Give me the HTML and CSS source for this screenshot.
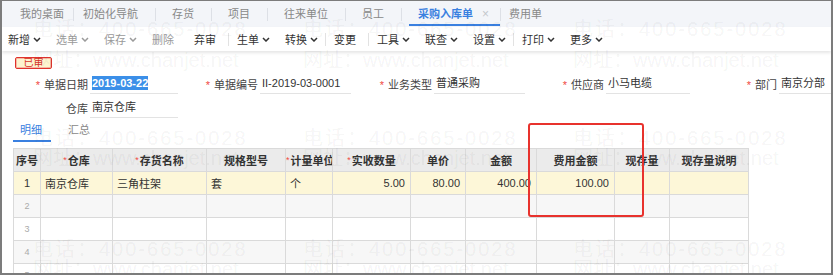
FILE: index.html
```html
<!DOCTYPE html>
<html lang="zh-CN">
<head>
<meta charset="UTF-8">
<title>采购入库单</title>
<link rel="stylesheet" href="styles.css">
</head>
<body>
<div class="window">
  <!-- top tabs -->
  <div class="tabs">
    <span class="tab home">我的桌面</span>
    <span class="tab nav">初始化导航</span>
    <span class="tab">存货</span>
    <span class="tab">项目</span>
    <span class="tab">往来单位</span>
    <span class="tab">员工</span>
    <span class="tab active">采购入库单<span class="close">×</span></span>
    <span class="tab last">费用单</span>
  </div>

  <!-- toolbar -->
  <div class="toolbar">
    <span class="btn">新增<svg class="caret" viewBox="0 0 8 5"><path d="M1 1l3 3 3-3"/></svg></span>
    <span class="btn off">选单<svg class="caret" viewBox="0 0 8 5"><path d="M1 1l3 3 3-3"/></svg></span>
    <span class="btn off">保存<svg class="caret" viewBox="0 0 8 5"><path d="M1 1l3 3 3-3"/></svg></span>
    <span class="btn plain off">删除</span>
    <span class="btn plain">弃审</span>
    <span class="sep"></span>
    <span class="btn">生单<svg class="caret" viewBox="0 0 8 5"><path d="M1 1l3 3 3-3"/></svg></span>
    <span class="btn">转换<svg class="caret" viewBox="0 0 8 5"><path d="M1 1l3 3 3-3"/></svg></span>
    <span class="sep"></span>
    <span class="btn plain">变更</span>
    <span class="sep"></span>
    <span class="btn">工具<svg class="caret" viewBox="0 0 8 5"><path d="M1 1l3 3 3-3"/></svg></span>
    <span class="btn">联查<svg class="caret" viewBox="0 0 8 5"><path d="M1 1l3 3 3-3"/></svg></span>
    <span class="btn">设置<svg class="caret" viewBox="0 0 8 5"><path d="M1 1l3 3 3-3"/></svg></span>
    <span class="sep"></span>
    <span class="btn">打印<svg class="caret" viewBox="0 0 8 5"><path d="M1 1l3 3 3-3"/></svg></span>
    <span class="btn">更多<svg class="caret" viewBox="0 0 8 5"><path d="M1 1l3 3 3-3"/></svg></span>
  </div>

  <div class="page">
    <div class="status"><span class="stamp">已审</span></div>

    <!-- header fields -->
    <div class="form">
      <label class="req">单据日期</label>
      <div class="field"><span class="selected">2019-03-22</span></div>
      <label class="req">单据编号</label>
      <div class="field">II-2019-03-0001</div>
      <label class="req">业务类型</label>
      <div class="field">普通采购</div>
      <label class="req">供应商</label>
      <div class="field">小马电缆</div>
      <label class="req">部门</label>
      <div class="field">南京分部</div>

      <label>仓库</label>
      <div class="field">南京仓库</div>
    </div>

    <div class="subtabs">
      <span class="subtab on">明细</span>
      <span class="subtab">汇总</span>
    </div>

    <table class="grid">
      <colgroup>
        <col class="c-no"><col class="c-wh"><col class="c-name"><col class="c-spec">
        <col class="c-unit"><col class="c-qty"><col class="c-price"><col class="c-amt">
        <col class="c-fee"><col class="c-stock"><col class="c-note">
      </colgroup>
      <thead>
        <tr>
          <th>序号</th>
          <th><i>*</i>仓库</th>
          <th><i>*</i>存货名称</th>
          <th>规格型号</th>
          <th><i>*</i>计量单位</th>
          <th><i>*</i>实收数量</th>
          <th>单价</th>
          <th>金额</th>
          <th>费用金额</th>
          <th>现存量</th>
          <th>现存量说明</th>
        </tr>
      </thead>
      <tbody>
        <tr class="current">
          <td class="no">1</td>
          <td>南京仓库</td>
          <td>三角柱架</td>
          <td>套</td>
          <td>个</td>
          <td class="num">5.00</td>
          <td class="num">80.00</td>
          <td class="num">400.00</td>
          <td class="num">100.00</td>
          <td></td>
          <td></td>
        </tr>
        <tr class="odd"><td class="no small">2</td><td></td><td></td><td></td><td></td><td></td><td></td><td></td><td></td><td></td><td></td></tr>
        <tr><td class="no small">3</td><td></td><td></td><td></td><td></td><td></td><td></td><td></td><td></td><td></td><td></td></tr>
        <tr class="odd"><td class="no small">4</td><td></td><td></td><td></td><td></td><td></td><td></td><td></td><td></td><td></td><td></td></tr>
        <tr><td class="no small">5</td><td></td><td></td><td></td><td></td><td></td><td></td><td></td><td></td><td></td><td></td></tr>
      </tbody>
    </table>
  </div>

  <!-- red annotation box -->
  <div class="mark"></div>

  <!-- watermark layer -->
  <div class="watermark">
    <div class="wm-row r1"><span class="tel">电话：400-665-0028</span><span class="tel">电话：400-665-0028</span><span class="tel">电话：400-665-0028</span></div>
    <div class="wm-row r2"><span>网址：www.chanjet.net</span><span>网址：www.chanjet.net</span><span>网址：www.chanjet.net</span></div>
    <div class="wm-row r3"><span class="tel">电话：400-665-0028</span><span class="tel">电话：400-665-0028</span><span class="tel">电话：400-665-0028</span></div>
    <div class="wm-row r4"><span>网址：www.chanjet.net</span><span>网址：www.chanjet.net</span><span>网址：www.chanjet.net</span></div>
    <div class="wm-row r5"><span class="tel">电话：400-665-0028</span><span class="tel">电话：400-665-0028</span><span class="tel">电话：400-665-0028</span></div>
    <div class="wm-row r6"><span>网址：www.chanjet.net</span><span>网址：www.chanjet.net</span><span>网址：www.chanjet.net</span></div>
  </div>
</div>
</body>
</html>
```

FILE: styles.css
```css
body {
  margin: 0;
  font-family: "Liberation Sans", "Noto Sans CJK SC", sans-serif;
  font-size: 11px;
  color: #333;
  background: #fff;
}

.window {
  position: relative;
  width: 833px;
  height: 275px;
  box-sizing: border-box;
  border: 2px solid #7c7c7c;
  border-top-width: 1px;
  overflow: hidden;
  background: #fff;
}

/* tabs */
.tabs {
  height: 26px;
  display: flex;
  align-items: center;
  background: #f3f5f9;
  color: #888;
}

.tab {
  position: relative;
  height: 26px;
  line-height: 26px;
  padding: 0 17px;
  display: flex;
  align-items: center;
}

.tab + .tab::before {
  content: "";
  position: absolute;
  left: 0;
  top: 7px;
  height: 13px;
  border-left: 1px solid #dde0e6;
}

.tab.home {
  padding: 0 9px 0 18px;
}

.tab.nav {
  padding-left: 10px;
}

.tab.active {
  color: #3a80e0;
  font-weight: bold;
  padding: 0 11px 0 17px;
}

.tab.active::after {
  content: "";
  position: absolute;
  left: 8px;
  right: 0;
  bottom: 1px;
  border-bottom: 2px solid #3a80e0;
}

.tab.last {
  padding-left: 9px;
}

.close {
  margin-left: 9px;
  color: #c4c7cc;
  font-weight: normal;
  font-size: 12px;
}

/* toolbar */
.toolbar {
  position: relative;
  height: 24px;
  display: flex;
  align-items: center;
  padding-left: 6px;
  background: #fff;
  box-shadow: 0 2px 3px rgba(0, 0, 0, 0.1);
}

.btn {
  display: flex;
  align-items: center;
  margin-right: 15px;
  color: #333;
}

.btn.plain {
  margin-right: 20px;
}

.btn.off {
  color: #9a9a9a;
}

.caret {
  width: 8px;
  height: 5px;
  margin-left: 3px;
  fill: none;
  stroke: currentColor;
  stroke-width: 1.5;
}

.sep {
  width: 1px;
  height: 13px;
  background: #e2e2e2;
  margin: 0 8px 0 -8px;
}

/* form area */
.page {
  padding-top: 5px;
}

.status {
  padding-left: 13px;
  height: 13px;
}

.stamp {
  display: inline-block;
  width: 35px;
  height: 10px;
  line-height: 10px;
  border: 1px solid #e0332c;
  border-radius: 2px;
  box-shadow: inset 0 0 0 1px #f6b9a6;
  background: #fdf4cf;
  color: #d8322a;
  font-size: 10px;
  text-align: center;
}

.form {
  display: grid;
  grid-template-columns: 88px 88px 82px 91px 83px 91px 81px 84px 89px 52px;
  grid-auto-rows: 24px;
  margin-top: 3px;
}

.form label {
  align-self: center;
  text-align: right;
  padding-right: 2px;
  color: #444;
}

.form label.req::before {
  content: "*";
  color: #f04a3f;
  margin-right: 4px;
}

.field {
  align-self: end;
  height: 19px;
  line-height: 18px;
  margin-bottom: 2px;
  padding-left: 2px;
  border-bottom: 1px solid #e3e3e3;
  white-space: nowrap;
  overflow: hidden;
  color: #333;
}

.selected {
  background: #3b8fe8;
  color: #fff;
  font-weight: bold;
  padding: 1px 0;
}

/* detail tabs */
.subtabs {
  display: flex;
  height: 21px;
  padding-left: 11px;
  margin-top: 1px;
}

.subtab {
  padding: 0 9px;
  line-height: 18px;
  color: #888;
}

.subtab.on {
  color: #3a80e0;
  border-bottom: 2px solid #3a80e0;
  padding: 0 9px 0 7px;
  margin-right: 8px;
}

/* grid */
.grid {
  margin: 6px 0 0 11px;
  border-collapse: collapse;
  table-layout: fixed;
  width: 735px;
}

.c-no { width: 27px; }
.c-wh { width: 72px; }
.c-name { width: 94px; }
.c-spec { width: 79px; }
.c-unit { width: 47px; }
.c-qty { width: 78px; }
.c-price { width: 55px; }
.c-amt { width: 71px; }
.c-fee { width: 78px; }
.c-stock { width: 55px; }
.c-note { width: 79px; }

.grid th,
.grid td {
  height: 22px;
  padding: 0 4px;
  border: 1px solid #dadada;
  white-space: nowrap;
  overflow: hidden;
}

.grid th {
  padding: 0;
  background: #ebebeb;
  font-weight: bold;
  color: #333;
  text-align: center;
}

.grid th i {
  font-style: normal;
  font-weight: normal;
  color: #f04a3f;
  margin-right: 1px;
  vertical-align: 2px;
  font-size: 9px;
}

.grid tr.current td {
  background: #fdf7d8;
}

.grid tr.odd td {
  background: #f7f7f7;
}

.grid td.no {
  text-align: center;
  padding: 0;
}

.grid td.small {
  color: #aaa;
  font-size: 9px;
}

.grid td.num {
  text-align: right;
  padding-right: 5px;
}

/* annotation */
.mark {
  position: absolute;
  left: 526px;
  top: 122px;
  width: 112px;
  height: 90px;
  border: 2px solid #e8322d;
  border-radius: 3px;
}

/* watermark */
.watermark {
  position: absolute;
  inset: 0;
  pointer-events: none;
  color: rgba(0, 0, 0, 0.055);
  font-family: "Liberation Sans", "Noto Sans CJK SC", sans-serif;
  font-size: 20px;
}

.wm-row {
  position: absolute;
  left: 31px;
  display: flex;
  white-space: nowrap;
  line-height: 22px;
}

.wm-row span {
  width: 270px;
}

.wm-row .tel {
  letter-spacing: 2px;
}

.r1 { top: 17px; }
.r2 { top: 48px; }
.r3 { top: 126px; }
.r4 { top: 146px; }
.r5 { top: 237px; }
.r6 { top: 257px; }
```
